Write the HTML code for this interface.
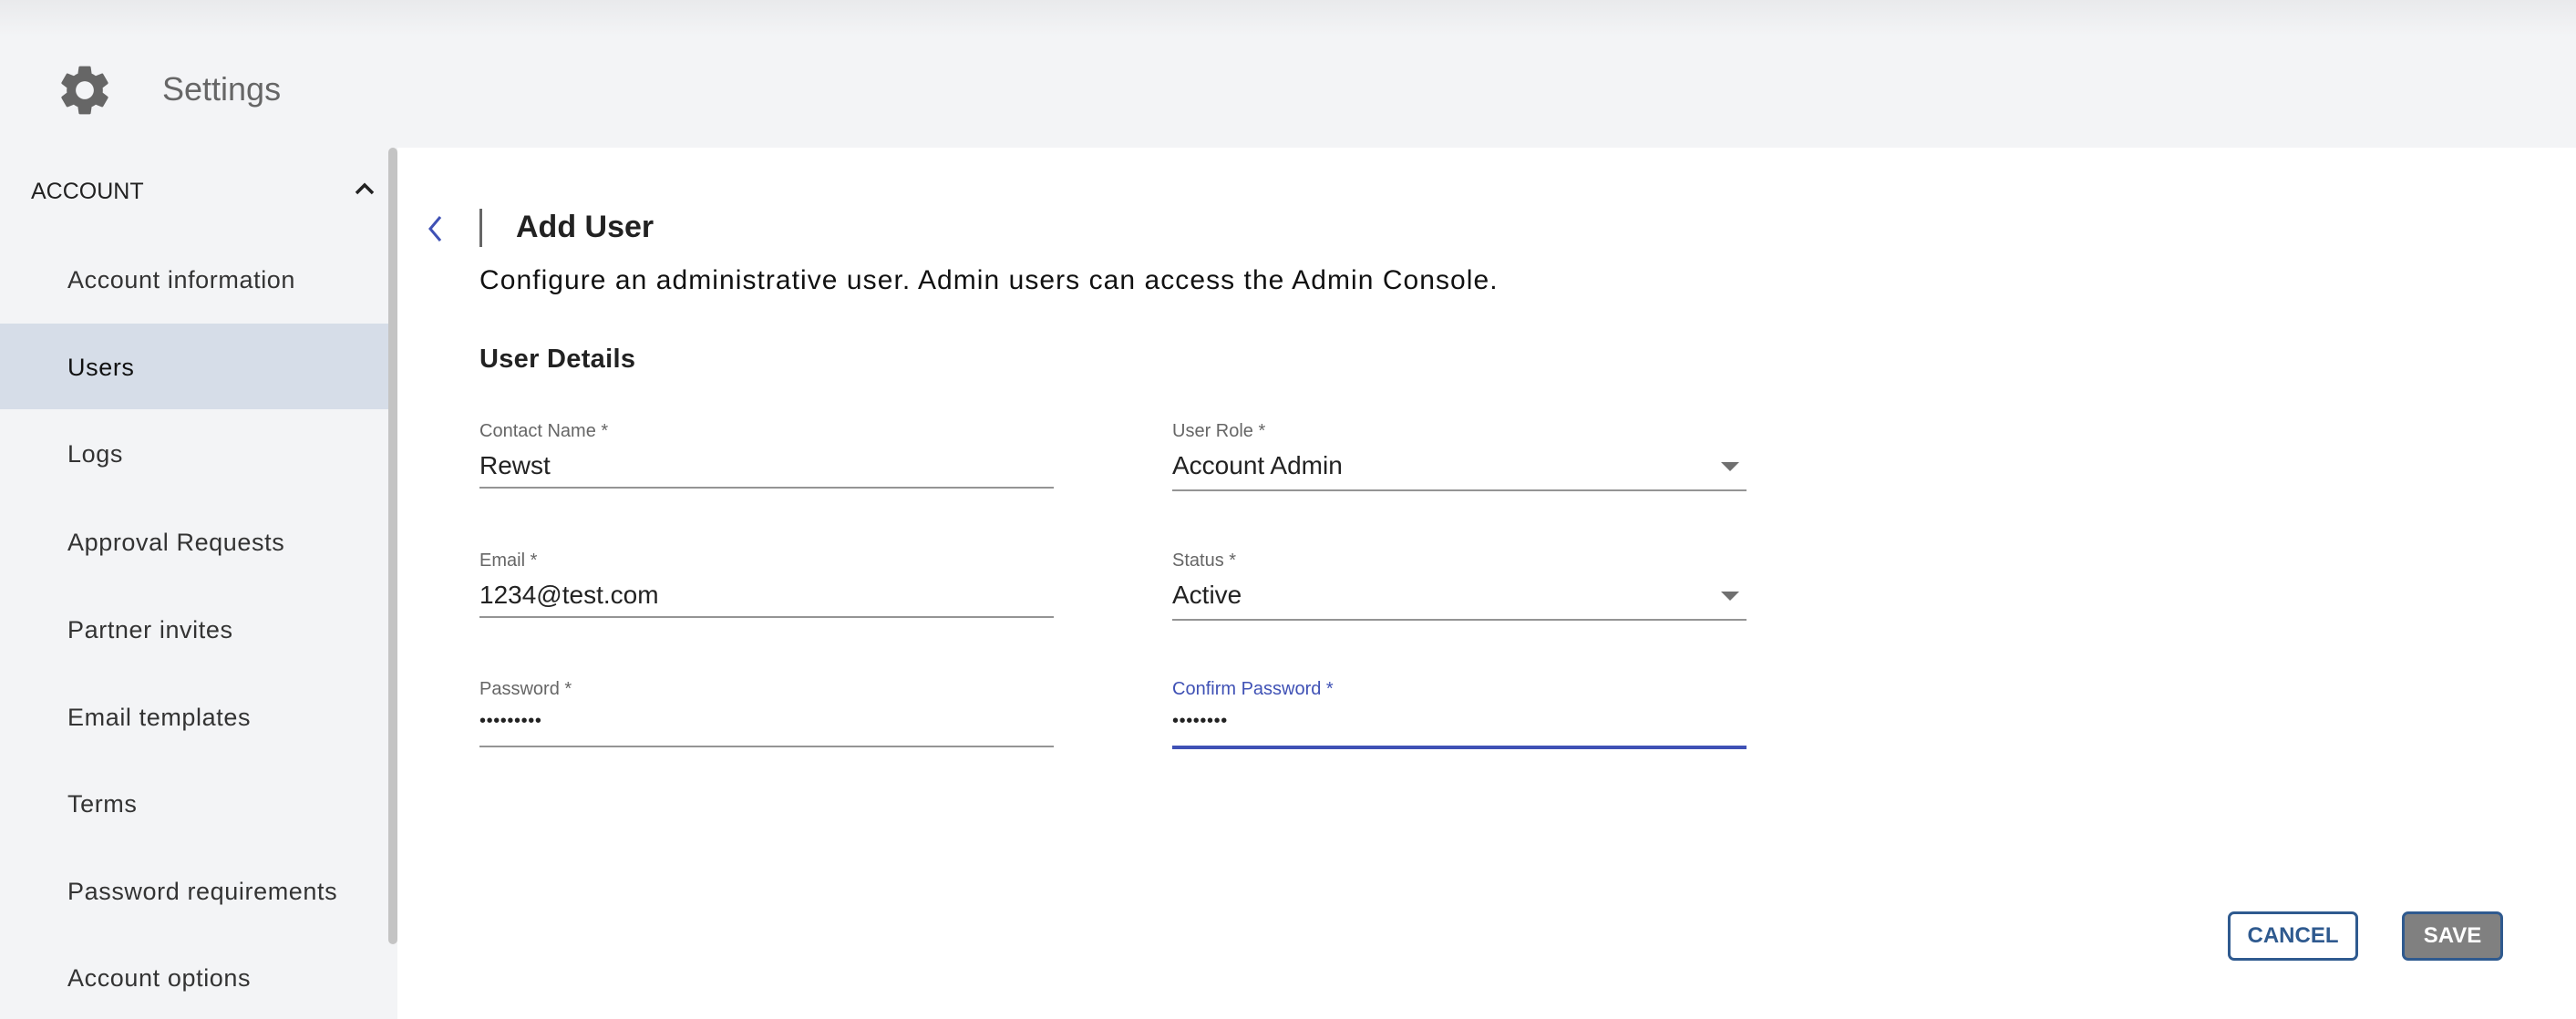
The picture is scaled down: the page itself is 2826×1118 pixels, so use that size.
<!DOCTYPE html>
<html><head><meta charset="utf-8"><style>
*{margin:0;padding:0;box-sizing:border-box}
body{width:2826px;height:1118px;overflow:hidden;background:#f3f4f6;font-family:"Liberation Sans",sans-serif;position:relative}
.abs{position:absolute;white-space:nowrap}
.hdr{left:0;top:0;width:2826px;height:162px;background:linear-gradient(#e9eaec 0,#f3f4f6 40px)}
.side{left:0;top:162px;width:426px;height:956px;background:#f3f4f6}
.main{left:436px;top:162px;width:2390px;height:956px;background:#fff}
.sb{left:426px;top:162px;width:10px;height:874px;background:#c4c4c4;border-radius:5px}
.mi{left:74px;font-size:27px;color:#333;line-height:32px;letter-spacing:0.6px}
.lbl{font-size:20px;color:#666}
.val{font-size:28px;color:#222}
.line{height:2px;background:#949494;width:630px}
.tri{width:0;height:0;border-left:10px solid transparent;border-right:10px solid transparent;border-top:10px solid #707070}
.btn{height:54px;border:3px solid #2f5a8f;border-radius:7px;font-weight:bold;font-size:24px;display:flex;align-items:center;justify-content:center}
.dots{font-size:20px;color:#222;letter-spacing:0.6px}
</style></head><body>
<div class="abs hdr"></div>
<svg class="abs" style="left:60px;top:66px" width="66" height="66" viewBox="0 0 24 24"><path fill="#666" d="M19.14 12.94c.04-.3.06-.61.06-.94 0-.32-.02-.64-.07-.94l2.030-1.58a.49.49 0 0 0 .12-.61l-1.92-3.32a.49.49 0 0 0-.59-.22l-2.39.96c-.5-.38-1.03-.7-1.62-.94l-.36-2.54a.48.48 0 0 0-.48-.41h-3.84c-.24 0-.43.17-.47.41l-.36 2.54c-.59.24-1.130.57-1.62.94l-2.39-.96a.48.48 0 0 0-.59.22L2.74 8.87c-.12.21-.08.47.12.61l2.03 1.58c-.05.3-.09.63-.09.94s.02.64.07.94l-2.03 1.58a.49.49 0 0 0-.12.61l1.92 3.32c.12.22.37.29.59.22l2.39-.96c.5.38 1.030.7 1.62.94l.36 2.54c.05.24.24.41.48.41h3.84c.24 0 .44-.17.47-.41l.36-2.54c.59-.24 1.13-.56 1.62-.94l2.39.96c.22.08.47 0 .59-.22l1.92-3.32c.12-.22.07-.47-.12-.61l-2.01-1.58zM12 15.6A3.6 3.6 0 1 1 12 8.4a3.6 3.6 0 0 1 0 7.2z"/></svg>
<div class="abs" style="left:178px;top:77px;font-size:36px;color:#666">Settings</div>
<div class="abs side"></div>
<div class="abs" style="left:0;top:355px;width:426px;height:94px;background:#d6dde8"></div>
<div class="abs sb"></div>
<div class="abs main"></div>
<div class="abs" style="left:34px;top:196px;font-size:25px;color:#222">ACCOUNT</div>
<svg class="abs" style="left:388px;top:198px" width="24" height="18" viewBox="0 0 24 18"><path d="M3 14 L12 5 L21 14" fill="none" stroke="#222" stroke-width="3.5"/></svg>
<div class="abs mi" style="top:291px">Account information</div>
<div class="abs mi" style="top:387px;color:#111">Users</div>
<div class="abs mi" style="top:482px">Logs</div>
<div class="abs mi" style="top:579px">Approval Requests</div>
<div class="abs mi" style="top:675px">Partner invites</div>
<div class="abs mi" style="top:771px">Email templates</div>
<div class="abs mi" style="top:866px">Terms</div>
<div class="abs mi" style="top:962px">Password requirements</div>
<div class="abs mi" style="top:1057px">Account options</div>

<svg class="abs" style="left:464px;top:234px" width="26" height="34" viewBox="0 0 26 34"><path d="M19 4 L8 17 L19 30" fill="none" stroke="#3f51b5" stroke-width="3"/></svg>
<div class="abs" style="left:526px;top:229px;width:3px;height:42px;background:#666"></div>
<div class="abs" style="left:566px;top:230px;font-size:34px;font-weight:bold;color:#222">Add User</div>
<div class="abs" style="left:526px;top:291px;font-size:30px;color:#111;letter-spacing:1.05px">Configure an administrative user. Admin users can access the Admin Console.</div>
<div class="abs" style="left:526px;top:378px;font-size:29px;font-weight:bold;color:#222;letter-spacing:0.3px">User Details</div>

<div class="abs lbl" style="left:526px;top:462px">Contact Name *</div>
<div class="abs val" style="left:526px;top:495px">Rewst</div>
<div class="abs line" style="left:526px;top:534px"></div>
<div class="abs lbl" style="left:1286px;top:462px">User Role *</div>
<div class="abs val" style="left:1286px;top:495px">Account Admin</div>
<div class="abs tri" style="left:1888px;top:507px"></div>
<div class="abs line" style="left:1286px;top:537px"></div>

<div class="abs lbl" style="left:526px;top:604px">Email *</div>
<div class="abs val" style="left:526px;top:637px">1234@test.com</div>
<div class="abs line" style="left:526px;top:676px"></div>
<div class="abs lbl" style="left:1286px;top:604px">Status *</div>
<div class="abs val" style="left:1286px;top:637px">Active</div>
<div class="abs tri" style="left:1888px;top:649px"></div>
<div class="abs line" style="left:1286px;top:679px"></div>

<div class="abs lbl" style="left:526px;top:745px">Password *</div>
<div class="abs dots" style="left:526px;top:780px">•••••••••</div>
<div class="abs line" style="left:526px;top:818px"></div>
<div class="abs lbl" style="left:1286px;top:745px;color:#3f51b5">Confirm Password *</div>
<div class="abs dots" style="left:1286px;top:780px">••••••••</div>
<div class="abs" style="left:1286px;top:818px;width:630px;height:4px;background:#3f51b5"></div>

<div class="abs btn" style="left:2444px;top:1000px;width:143px;color:#2f5a8f;background:#fff">CANCEL</div>
<div class="abs btn" style="left:2635px;top:1000px;width:111px;color:#fff;background:#808080">SAVE</div>
</body></html>
